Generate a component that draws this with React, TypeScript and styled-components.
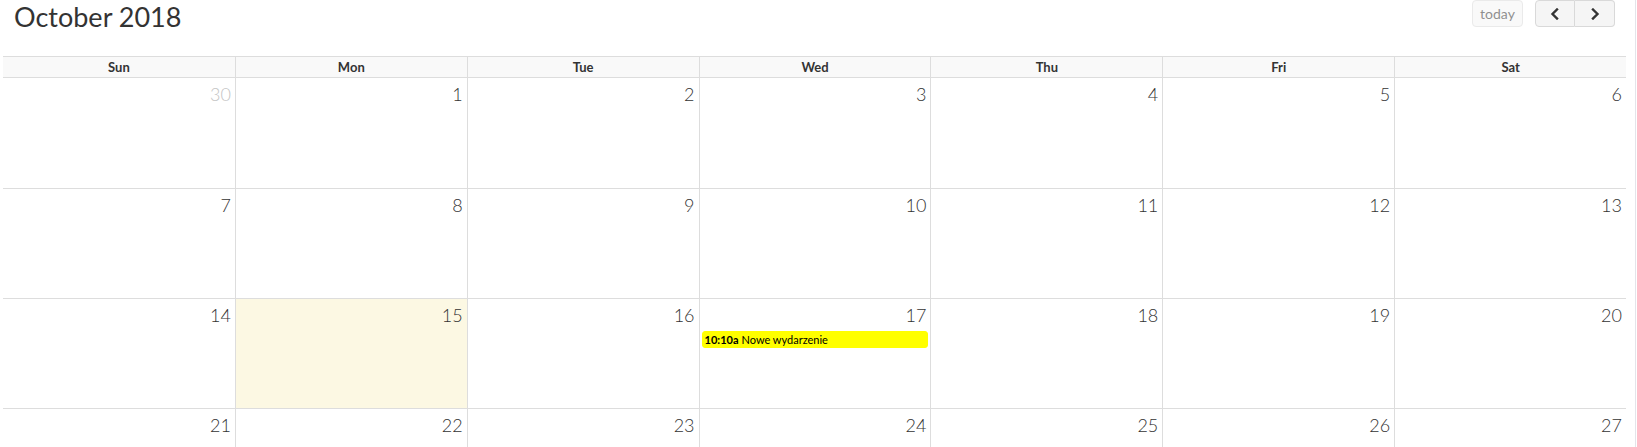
import React from "react";
import styled, { createGlobalStyle } from "styled-components";

const GlobalStyle = createGlobalStyle`
  html, body { margin: 0; padding: 0; background: #fff; }
  body { font-family: Lato, "Open Sans", sans-serif; color: #333; }
`;

const Page = styled.div`
  width: 1636px;
  height: 447px;
  overflow: hidden;
  box-sizing: border-box;
  border-right: 1px solid #e4e4ea;
`;

const Container = styled.div`
  width: 1623px;
  margin-left: 3px;
`;

const Toolbar = styled.div`
  display: flex;
  justify-content: space-between;
  align-items: flex-start;
  height: 56px;
  padding: 0 11px;
`;

const Title = styled.h2`
  margin: 0;
  font-family: Lato, sans-serif;
  font-weight: 400;
  font-size: 27px;
  line-height: 34px;
  color: #333;
`;

const Controls = styled.div`
  display: flex;
  gap: 12px;
`;

const Button = styled.button<{ $disabled?: boolean; $w: number; $pos?: "left" | "right" | "single" }>`
  box-sizing: border-box;
  width: ${(p) => p.$w}px;
  height: 27px;
  display: flex;
  align-items: center;
  justify-content: center;
  padding: 0;
  background: #f5f5f5;
  border: 1px solid #d9d9d9;
  color: #333;
  font-family: Lato, sans-serif;
  font-size: 14px;
  cursor: pointer;
  opacity: ${(p) => (p.$disabled ? 0.55 : 1)};
  border-radius: ${(p) =>
    p.$pos === "left" ? "4px 0 0 4px" : p.$pos === "right" ? "0 4px 4px 0" : "4px"};
  ${(p) => (p.$pos === "right" ? "border-left: none;" : "")}
`;

const ButtonGroup = styled.div`
  display: flex;
`;

const HeaderRow = styled.div`
  display: grid;
  grid-template-columns: repeat(7, 1fr);
  border-top: 1px solid #ddd;
  border-bottom: 1px solid #ddd;
  background: #f9f9f9;
`;

const HeaderCell = styled.div<{ $first?: boolean }>`
  height: 20px;
  line-height: 20px;
  text-align: center;
  font-weight: 700;
  font-size: 13px;
  color: #333;
  border-left: ${(p) => (p.$first ? "none" : "1px solid #ddd")};
`;

const WeekRow = styled.div<{ $h: number }>`
  display: grid;
  grid-template-columns: repeat(7, 1fr);
  height: ${(p) => p.$h}px;
  box-sizing: border-box;
  border-bottom: 1px solid #ddd;
`;

const DayCell = styled.div<{ $first?: boolean; $today?: boolean }>`
  border-left: ${(p) => (p.$first ? "none" : "1px solid #ddd")};
  background: ${(p) => (p.$today ? "#fcf8e3" : "transparent")};
  display: flex;
  flex-direction: column;
  min-width: 0;
`;

const DayNumber = styled.div<{ $other?: boolean }>`
  text-align: right;
  padding: 4px 4px 0 4px;
  font-family: Lato, sans-serif;
  font-weight: 300;
  font-size: 18px;
  line-height: 24px;
  color: ${(p) => (p.$other ? "#c4c4c4" : "#333")};
`;

const Event = styled.div`
  margin: 4px 2px 0 2px;
  background: #ffff00;
  border: 1px solid #ffff00;
  border-radius: 3px;
  padding: 0 2px;
  font-family: Lato, sans-serif;
  font-size: 11px;
  line-height: 15px;
  color: #000;
  white-space: nowrap;
  overflow: hidden;
`;

const EventTime = styled.span`
  font-weight: 700;
  margin-right: 3px;
`;

const Chevron = ({ dir }: { dir: "left" | "right" }) => (
  <svg width="10" height="12" viewBox="0 0 10 12" fill="none">
    <path
      d={dir === "left" ? "M7 1.5 L2.5 6 L7 10.5" : "M3 1.5 L7.5 6 L3 10.5"}
      stroke="#333"
      strokeWidth="2.4"
      strokeLinecap="square"
    />
  </svg>
);

const days = ["Sun", "Mon", "Tue", "Wed", "Thu", "Fri", "Sat"];
const weeks = [
  [30, 1, 2, 3, 4, 5, 6],
  [7, 8, 9, 10, 11, 12, 13],
  [14, 15, 16, 17, 18, 19, 20],
  [21, 22, 23, 24, 25, 26, 27],
];
const rowHeights = [111, 110, 110, 110];

export default function App() {
  return (
    <Page>
      <GlobalStyle />
      <Container>
        <Toolbar>
          <Title>October 2018</Title>
          <Controls>
            <Button $w={51} $disabled>
              today
            </Button>
            <ButtonGroup>
              <Button $w={40} $pos="left" aria-label="prev">
                <Chevron dir="left" />
              </Button>
              <Button $w={40} $pos="right" aria-label="next">
                <Chevron dir="right" />
              </Button>
            </ButtonGroup>
          </Controls>
        </Toolbar>
        <HeaderRow>
          {days.map((d, i) => (
            <HeaderCell key={d} $first={i === 0}>
              {d}
            </HeaderCell>
          ))}
        </HeaderRow>
        {weeks.map((w, wi) => (
          <WeekRow key={wi} $h={rowHeights[wi]}>
            {w.map((n, di) => (
              <DayCell key={di} $first={di === 0} $today={n === 15}>
                <DayNumber $other={wi === 0 && n === 30}>{n}</DayNumber>
                {n === 17 && (
                  <Event>
                    <EventTime>10:10a</EventTime>Nowe wydarzenie
                  </Event>
                )}
              </DayCell>
            ))}
          </WeekRow>
        ))}
      </Container>
    </Page>
  );
}
